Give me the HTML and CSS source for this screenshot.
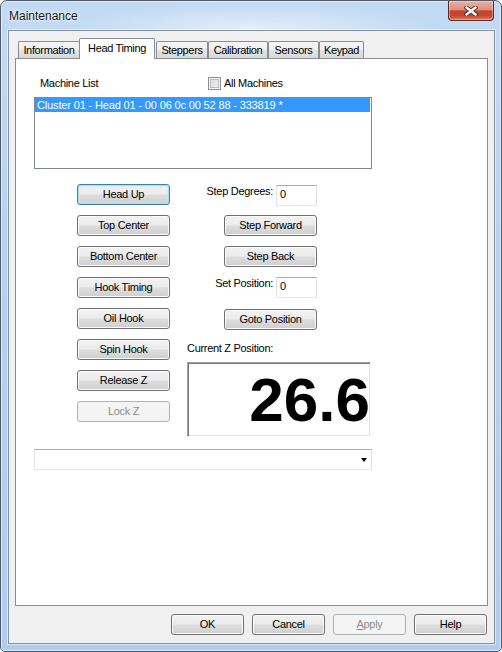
FILE: index.html
```html
<!DOCTYPE html>
<html>
<head>
<meta charset="utf-8">
<title>Maintenance</title>
<link rel="stylesheet" href="styles.css">
</head>
<body>
<div class="window">
  <div class="titlebar">
    <span class="title">Maintenance</span>
    <span class="close">
      <svg width="14" height="10" viewBox="0 0 14 10">
        <path d="M2.5 1.5 L11.5 8.5 M11.5 1.5 L2.5 8.5" stroke="#5a2a22" stroke-width="4.2" stroke-linecap="square" fill="none"/>
        <path d="M2.5 1.5 L11.5 8.5 M11.5 1.5 L2.5 8.5" stroke="#ffffff" stroke-width="2.4" stroke-linecap="square" fill="none"/>
      </svg>
    </span>
  </div>
  <div class="client">
    <div class="tabctl">
      <div class="tabs">
        <div class="tab t-info">Information</div>
        <div class="tab sel t-head">Head Timing</div>
        <div class="tab t-step">Steppers</div>
        <div class="tab t-cal">Calibration</div>
        <div class="tab t-sens">Sensors</div>
        <div class="tab t-key">Keypad</div>
      </div>
      <div class="panel">
        <div class="list-head">
          <span class="machine">Machine List</span>
          <span class="check"><span class="cbox"></span>All Machines</span>
        </div>
        <div class="listbox">
          <div class="item">Cluster 01 - Head 01 - 00 06 0c 00 52 88 - 333819 *</div>
        </div>
        <div class="controls">
          <div class="lcol">
            <button class="btn focus">Head Up</button>
            <button class="btn">Top Center</button>
            <button class="btn">Bottom Center</button>
            <button class="btn">Hook Timing</button>
            <button class="btn">Oil Hook</button>
            <button class="btn">Spin Hook</button>
            <button class="btn">Release Z</button>
            <button class="btn disabled">Lock Z</button>
          </div>
          <div class="rcol">
            <div class="field f1"><span class="flabel">Step Degrees:</span><span class="textbox">0</span></div>
            <button class="btn rbtn m9">Step Forward</button>
            <button class="btn rbtn m10">Step Back</button>
            <div class="field m10"><span class="flabel">Set Position:</span><span class="textbox">0</span></div>
            <button class="btn rbtn m11">Goto Position</button>
            <div class="zlabel">Current Z Position:</div>
            <div class="zbox">26.6</div>
          </div>
        </div>
        <div class="combo"><span class="arrow"></span></div>
      </div>
    </div>
    <div class="footer">
      <button class="btn fbtn">OK</button>
      <button class="btn fbtn">Cancel</button>
      <button class="btn fbtn disabled"><u>A</u>pply</button>
      <button class="btn fbtn">Help</button>
    </div>
  </div>
</div>
</body>
</html>
```
FILE: styles.css
```css
* { box-sizing: border-box; }
html, body { margin: 0; padding: 0; background: #ffffff; }
body {
  width: 502px;
  height: 652px;
  overflow: hidden;
  font-family: "Liberation Sans", Arial, sans-serif;
  font-size: 11px;
  color: #000;
}
.window {
  width: 502px;
  height: 652px;
  border: 1px solid #505a66;
  border-radius: 7px 7px 5px 5px;
  padding: 0 6px 7px 7px;
  display: flex;
  flex-direction: column;
  background:
    radial-gradient(ellipse 190px 24px at 250px 27px, rgba(255,255,255,0.55), rgba(255,255,255,0) 100%),
    linear-gradient(#c2daf3, #b6d2f1 40%, #aecdf0 100%);
  box-shadow: inset 0 0 0 1px rgba(255,255,255,0.55);
}
.titlebar {
  height: 29px;
  flex: none;
  display: flex;
  justify-content: space-between;
  align-items: flex-start;
}
.title {
  padding: 8px 0 0 1px;
  font-size: 12px;
  line-height: 15px;
  color: #1a1a1a;
  text-shadow: 0 0 6px #ffffff, 0 0 3px #ffffff;
}
.close {
  width: 46px;
  height: 20px;
  margin-right: 1px;
  border: 1px solid #5e2a22;
  border-top: none;
  border-radius: 0 0 4px 4px;
  background: linear-gradient(#eab0a3 0%, #df8f7f 45%, #c84632 52%, #c3452f 75%, #d87860 100%);
  box-shadow: inset 0 0 0 1px rgba(255,220,210,0.45);
  display: flex;
  align-items: center;
  justify-content: center;
}
.close svg { display: block; }
.client {
  flex: 1;
  background: #f0f0f0;
  border: 1px solid #84929f;
  box-shadow: 0 0 0 1px rgba(255,255,255,0.5);
  display: flex;
  flex-direction: column;
}
.tabctl { margin: 7px 6px 0; }
.tabs {
  display: flex;
  align-items: flex-start;
  height: 21px;
  padding-left: 3px;
  margin-bottom: -1px;
  position: relative;
  z-index: 1;
}
.tab {
  height: 17px;
  margin-top: 3px;
  border: 1px solid #898c95;
  border-bottom: none;
  border-radius: 2px 2px 0 0;
  background: linear-gradient(#f6f6f6, #eeeeee 50%, #e3e3e3 52%, #d9d9d9);
  display: flex;
  align-items: center;
  justify-content: center;
  letter-spacing: -0.35px;
  line-height: 13px;
  padding-top: 1px;
  white-space: nowrap;
}
.tab.sel {
  height: 21px;
  margin-top: 0;
  margin-left: -1px;
  background: #ffffff;
  padding-top: 0;
  padding-bottom: 2px;
}
.t-info { width: 62px; }
.t-head { width: 76px; }
.t-step { width: 52px; margin-left: 1px; }
.t-cal { width: 60px; }
.t-sens { width: 51px; }
.t-key { width: 45px; }
.panel {
  background: #ffffff;
  border: 1px solid #898c95;
  height: 548px;
  padding: 18px 0 0 18px;
  display: flex;
  flex-direction: column;
  align-items: flex-start;
}
.list-head {
  display: flex;
  align-items: center;
  height: 13px;
  letter-spacing: -0.3px;
  line-height: 13px;
}
.machine { width: 174px; padding-left: 6px; }
.check { display: flex; align-items: center; gap: 3px; }
.cbox {
  width: 13px;
  height: 13px;
  border: 1px solid #8e8f8f;
  background: linear-gradient(135deg, #cfd3d8, #f7f7f7);
  box-shadow: inset 0 0 0 1px #f4f4f4, inset 0 0 0 2px #b8bcc1;
}
.listbox {
  width: 338px;
  height: 72px;
  margin-top: 7px;
  border: 1px solid #828790;
  background: #fff;
}
.item {
  height: 14px;
  line-height: 14px;
  margin-right: 1px;
  padding-left: 2px;
  background: #3399ff;
  color: #ffffff;
  letter-spacing: -0.15px;
  white-space: nowrap;
}
.controls {
  display: flex;
  align-items: flex-start;
  margin-top: 15px;
  padding-left: 43px;
}
.lcol {
  width: 93px;
  display: flex;
  flex-direction: column;
  gap: 10px;
}
.rcol {
  width: 184px;
  margin-left: 17px;
  display: flex;
  flex-direction: column;
  align-items: flex-start;
}
.btn {
  -webkit-appearance: none;
  appearance: none;
  margin: 0;
  padding: 0;
  width: 93px;
  height: 21px;
  border: 1px solid #707070;
  border-radius: 3px;
  background: linear-gradient(#f2f2f2 0%, #ebebeb 48%, #dddddd 52%, #cfcfcf 100%);
  box-shadow: inset 0 0 0 1px #fbfbfb;
  font-family: "Liberation Sans", Arial, sans-serif;
  font-size: 11px;
  letter-spacing: -0.3px;
  color: #000;
  line-height: 13px;
  display: flex;
  align-items: center;
  justify-content: center;
  white-space: nowrap;
}
.btn.focus {
  border-color: #3c7fb1;
  box-shadow: inset 0 0 0 1px #a9dcf6, inset 0 0 3px 1px #c6eafb;
}
.btn.disabled {
  border-color: #adb2b5;
  background: #f4f4f4;
  box-shadow: none;
  color: #8d8d8d;
}
.btn u { text-decoration: underline; }
.rbtn { margin-left: 37px; }
.field {
  width: 130px;
  height: 21px;
  display: flex;
  justify-content: flex-end;
  align-items: flex-start;
  gap: 3px;
}
.f1 { margin-top: 1px; }
.m9 { margin-top: 9px; }
.m10 { margin-top: 10px; }
.m11 { margin-top: 11px; }
.flabel {
  line-height: 13px;
  letter-spacing: -0.3px;
  white-space: nowrap;
}
.textbox {
  width: 41px;
  height: 21px;
  border: 1px solid;
  border-color: #abadb3 #dbdfe6 #e3e9ef #e2e3ea;
  background: #fff;
  padding: 1px 0 0 3px;
  line-height: 15px;
}
.zlabel {
  margin-top: 12px;
  line-height: 13px;
  letter-spacing: -0.3px;
  white-space: nowrap;
}
.zbox {
  margin-top: 7px;
  width: 184px;
  height: 75px;
  border: 1px solid;
  border-color: #a0a0a0 #ffffff #ffffff #a0a0a0;
  box-shadow: inset 1px 1px 0 #7a7a7a, inset -1px -1px 0 #e3e3e3;
  background: #fff;
  text-align: right;
  font-weight: bold;
  font-size: 62px;
  line-height: 62px;
  padding: 6px 0 0 0;
  letter-spacing: 0;
}
.combo {
  margin-top: 12px;
  width: 338px;
  height: 21px;
  border: 1px solid;
  border-color: #abadb3 #dbdfe6 #e3e9ef #e2e3ea;
  background: #fff;
  display: flex;
  justify-content: flex-end;
  align-items: center;
  padding-right: 4px;
}
.arrow {
  width: 0;
  height: 0;
  border-left: 3.5px solid transparent;
  border-right: 3.5px solid transparent;
  border-top: 4px solid #000;
  margin-top: 1px;
}
.footer {
  display: flex;
  justify-content: flex-end;
  gap: 8px;
  padding-right: 7px;
  margin-top: 8px;
}
.fbtn { width: 73px; }
```
